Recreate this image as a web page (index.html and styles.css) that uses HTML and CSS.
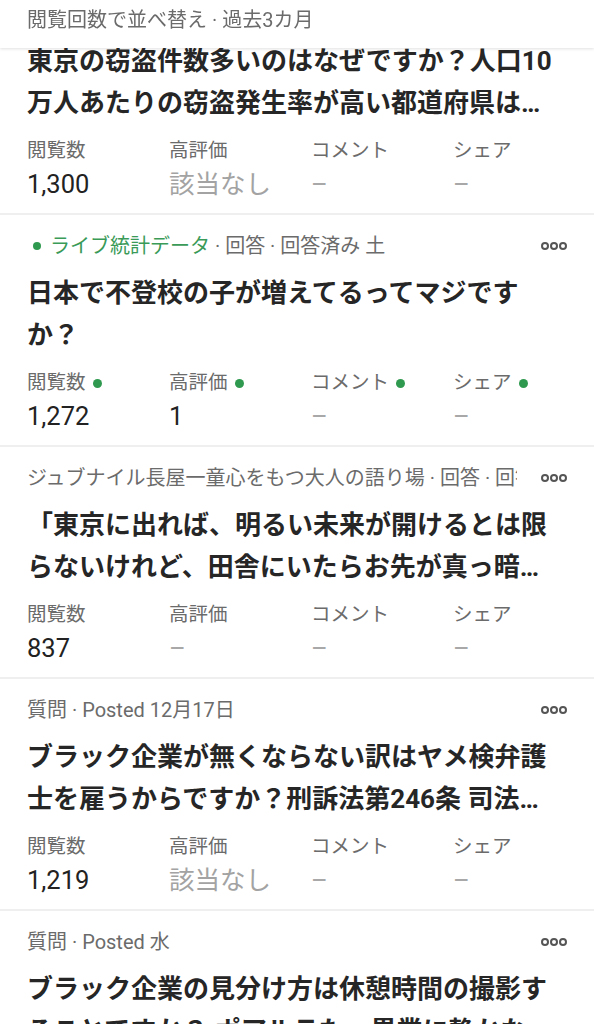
FILE: index.html
```html
<!DOCTYPE html>
<html lang="ja">
<head>
<meta charset="utf-8">
<title>閲覧回数</title>
<link rel="stylesheet" href="styles.css">
</head>
<body>
<header class="bar">閲覧回数で並べ替え · 過去3カ月</header>
<main class="list">
  <article class="card card--scrolled">
    <h2 class="title">東京の窃盗件数多いのはなぜですか？人口10万人あたりの窃盗発生率が高い都道府県はどこですか？</h2>
    <div class="stats">
      <div class="stat"><span class="label">閲覧数</span><span class="value">1,300</span></div>
      <div class="stat"><span class="label">高評価</span><span class="value value--na">該当なし</span></div>
      <div class="stat"><span class="label">コメント</span><span class="value value--dash">–</span></div>
      <div class="stat"><span class="label">シェア</span><span class="value value--dash">–</span></div>
    </div>
  </article>

  <article class="card">
    <div class="meta">
      <span class="meta-text"><span class="live-dot"></span><span class="live">ライブ統計データ</span> · 回答 · 回答済み 土</span>
      <svg class="more" viewBox="0 0 26 10" width="26" height="10"><circle cx="4" cy="5" r="3"/><circle cx="13" cy="5" r="3"/><circle cx="22" cy="5" r="3"/></svg>
    </div>
    <h2 class="title">日本で不登校の子が増えてるってマジですか？</h2>
    <div class="stats">
      <div class="stat"><span class="label">閲覧数<span class="dot"></span></span><span class="value">1,272</span></div>
      <div class="stat"><span class="label">高評価<span class="dot"></span></span><span class="value">1</span></div>
      <div class="stat"><span class="label">コメント<span class="dot"></span></span><span class="value value--dash">–</span></div>
      <div class="stat"><span class="label">シェア<span class="dot"></span></span><span class="value value--dash">–</span></div>
    </div>
  </article>

  <article class="card">
    <div class="meta">
      <span class="meta-text">ジュブナイル長屋一童心をもつ大人の語り場 · 回答 · 回答済み 金</span>
      <svg class="more" viewBox="0 0 26 10" width="26" height="10"><circle cx="4" cy="5" r="3"/><circle cx="13" cy="5" r="3"/><circle cx="22" cy="5" r="3"/></svg>
    </div>
    <h2 class="title">「東京に出れば、明るい未来が開けるとは限らないけれど、田舎にいたらお先が真っ暗」という言葉をどう思いますか？</h2>
    <div class="stats">
      <div class="stat"><span class="label">閲覧数</span><span class="value">837</span></div>
      <div class="stat"><span class="label">高評価</span><span class="value value--dash">–</span></div>
      <div class="stat"><span class="label">コメント</span><span class="value value--dash">–</span></div>
      <div class="stat"><span class="label">シェア</span><span class="value value--dash">–</span></div>
    </div>
  </article>

  <article class="card">
    <div class="meta">
      <span class="meta-text">質問 · Posted 12月17日</span>
      <svg class="more" viewBox="0 0 26 10" width="26" height="10"><circle cx="4" cy="5" r="3"/><circle cx="13" cy="5" r="3"/><circle cx="22" cy="5" r="3"/></svg>
    </div>
    <h2 class="title">ブラック企業が無くならない訳はヤメ検弁護士を雇うからですか？刑訴法第246条 司法警察員は犯罪の捜査をしたときは</h2>
    <div class="stats">
      <div class="stat"><span class="label">閲覧数</span><span class="value">1,219</span></div>
      <div class="stat"><span class="label">高評価</span><span class="value value--na">該当なし</span></div>
      <div class="stat"><span class="label">コメント</span><span class="value value--dash">–</span></div>
      <div class="stat"><span class="label">シェア</span><span class="value value--dash">–</span></div>
    </div>
  </article>

  <article class="card">
    <div class="meta">
      <span class="meta-text">質問 · Posted 水</span>
      <svg class="more" viewBox="0 0 26 10" width="26" height="10"><circle cx="4" cy="5" r="3"/><circle cx="13" cy="5" r="3"/><circle cx="22" cy="5" r="3"/></svg>
    </div>
    <h2 class="title">ブラック企業の見分け方は休憩時間の撮影することですか？ ポアルラた、異業に静かな職場を見分けるには</h2>
    <div class="stats">
      <div class="stat"><span class="label">閲覧数</span><span class="value">1,105</span></div>
      <div class="stat"><span class="label">高評価</span><span class="value value--dash">–</span></div>
      <div class="stat"><span class="label">コメント</span><span class="value value--dash">–</span></div>
      <div class="stat"><span class="label">シェア</span><span class="value value--dash">–</span></div>
    </div>
  </article>
</main>
</body>
</html>
```

FILE: styles.css
```css
* { box-sizing: border-box; }

html, body {
  margin: 0;
  padding: 0;
  background: #ffffff;
}

body {
  font-family: Roboto, "Noto Sans CJK JP", sans-serif;
  color: #222222;
  width: 594px;
  height: 1024px;
  overflow: hidden;
}

.bar {
  position: sticky;
  top: 0;
  z-index: 2;
  height: 48px;
  padding: 8px 27px 0;
  font-size: 20px;
  line-height: 24px;
  color: #6b6b6b;
  background: #ffffff;
  box-shadow: 0 1px 3px rgba(0, 0, 0, 0.12);
  white-space: nowrap;
}

.list {
  display: flex;
  flex-direction: column;
}

.card {
  padding: 19px 27px 13px;
  border-bottom: 2px solid #efefef;
}

.card--scrolled {
  margin-top: -8px;
  padding-top: 0;
}

.meta {
  display: flex;
  align-items: center;
  height: 24px;
  font-size: 20px;
  line-height: 24px;
  color: #6b6b6b;
  margin-bottom: 14px;
}

.meta-text {
  flex: 1;
  min-width: 0;
  overflow: hidden;
  white-space: nowrap;
  margin-right: 24px;
}

.live {
  color: #3a9a57;
}

.live-dot {
  display: inline-block;
  width: 8px;
  height: 8px;
  border-radius: 50%;
  background: #2f9a4f;
  margin: 0 9px 0 6px;
  vertical-align: 3px;
}

.more {
  flex: none;
  fill: none;
  stroke: #555555;
  stroke-width: 2;
}

.title {
  margin: 0 4px 0 0;
  font-size: 26px;
  line-height: 42px;
  font-weight: 700;
  color: #262626;
  display: -webkit-box;
  -webkit-box-orient: vertical;
  -webkit-line-clamp: 2;
  overflow: hidden;
  height: 84px;
}

.stats {
  display: grid;
  grid-template-columns: repeat(4, 142px);
  margin-top: 14px;
}

.stat {
  display: flex;
  flex-direction: column;
  gap: 4px;
}

.label {
  display: flex;
  align-items: center;
  font-size: 19.5px;
  line-height: 26px;
  color: #6b6b6b;
  white-space: nowrap;
}

.dot {
  width: 9px;
  height: 9px;
  border-radius: 50%;
  background: #2f9a4f;
  margin-left: 7px;
}

.value {
  font-size: 25.5px;
  line-height: 32px;
  color: #222222;
  white-space: nowrap;
}

.value--na {
  color: #a3a3a3;
}

.value--dash {
  color: #a8a8a8;
}
```
